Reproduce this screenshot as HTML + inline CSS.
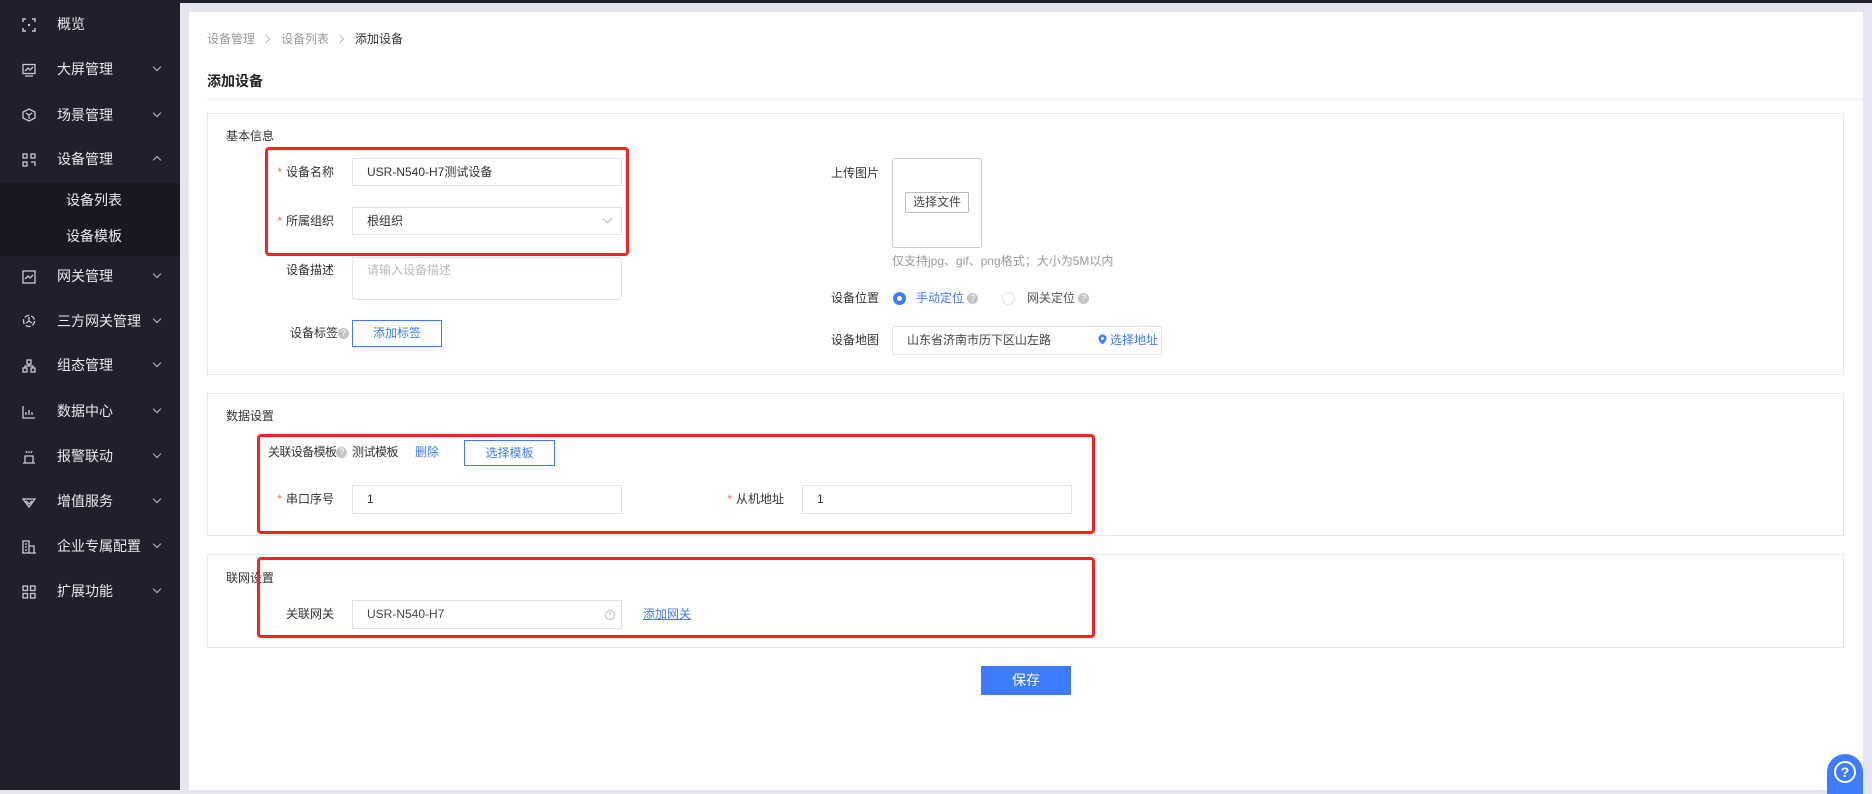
<!DOCTYPE html>
<html><head><meta charset="utf-8"><style>
*{margin:0;padding:0;box-sizing:border-box}
html{background:#e4e6ef}
body{width:1872px;height:790px;overflow:hidden;background:#e4e6ef;font-family:"Liberation Sans","Noto Sans CJK SC",sans-serif;font-size:12px;color:#333;position:relative}
.a{position:absolute;white-space:nowrap}
#side{position:absolute;left:0;top:0;width:180px;height:790px;background:#1e202b}
.mi{position:absolute;left:57px;color:#e8e9ee;font-size:14px;line-height:20px}
.ic{position:absolute;left:22px;width:14px;height:14px}
.ar{position:absolute;left:154px;width:6px;height:6px;border-right:1.2px solid #b9bcc7;border-bottom:1.2px solid #b9bcc7;transform:rotate(45deg)}
#main{position:absolute;left:189px;top:12px;width:1674px;height:778px;background:#fff}
.card{position:absolute;left:207px;width:1637px;border:1px solid #e6e6ea;background:#fff}
.lab{position:absolute;font-size:12px;color:#333;line-height:16px;text-align:right}
.inp{position:absolute;border:1px solid #dfe1e8;background:#fff;font-size:12px;color:#333;line-height:26px;padding-left:14px}
.star{color:#f56c6c;margin-right:4px}
.red{position:absolute;border:3px solid #ff2020;border-radius:4px}
.q{display:inline-block;width:11px;height:11px;border-radius:50%;background:#c4c4c4;color:#fff;font-size:9px;line-height:11px;text-align:center;vertical-align:1px}
.blue{color:#3d7bff}
.sep{display:inline-block;width:6px;height:6px;border-right:1px solid #bbb;border-top:1px solid #bbb;transform:rotate(45deg);margin:0 12px 1px 8px}
</style></head><body>
<div class="a" style="left:0;top:0;width:1872px;height:3px;background:#1e202b"></div>
<div id="side">
 <div style="position:absolute;left:0;top:183px;width:180px;height:73px;background:#171920"></div>
 <svg class="ic" style="top:18px" viewBox="0 0 14 14" fill="none" stroke="#c9cbd3" stroke-width="1.4"><path d="M1 4V1h3M10 1h3v3M13 10v3h-3M4 13H1v-3"/><rect x="6" y="6" width="2" height="2" fill="#c9cbd3" stroke="none"/></svg>
 <div class="mi" style="top:14px">概览</div>
 <svg class="ic" style="top:63px" viewBox="0 0 14 14" fill="none" stroke="#c9cbd3" stroke-width="1.3"><rect x="1" y="1.5" width="12" height="9"/><path d="M3 8l3-3 2 2 3-3M3 13h8"/></svg>
 <div class="mi" style="top:59px">大屏管理</div><div class="ar" style="top:64px"></div>
 <svg class="ic" style="top:108px" viewBox="0 0 14 14" fill="none" stroke="#c9cbd3" stroke-width="1.3"><path d="M7 1l6 3v6l-6 3-6-3V4zM4 5l3 2 3-2M7 7v4"/></svg>
 <div class="mi" style="top:105px">场景管理</div><div class="ar" style="top:110px"></div>
 <svg class="ic" style="top:153px" viewBox="0 0 14 14" fill="none" stroke="#c9cbd3" stroke-width="1.3"><rect x="1" y="1" width="4" height="4"/><rect x="9" y="1" width="4" height="4"/><rect x="1" y="9" width="4" height="4"/><path d="M9 9h4v4"/></svg>
 <div class="mi" style="top:149px">设备管理</div><div class="ar" style="top:157px;transform:rotate(225deg)"></div>
 <div class="mi" style="top:190px;left:66px">设备列表</div>
 <div class="mi" style="top:226px;left:66px">设备模板</div>
 <svg class="ic" style="top:270px" viewBox="0 0 14 14" fill="none" stroke="#c9cbd3" stroke-width="1.3"><rect x="1" y="1" width="12" height="12"/><path d="M3 9l3-3 2 2 3-3"/></svg>
 <div class="mi" style="top:266px">网关管理</div><div class="ar" style="top:271px"></div>
 <svg class="ic" style="top:314px" viewBox="0 0 14 14" fill="none" stroke="#c9cbd3" stroke-width="1.3"><circle cx="7" cy="7" r="5.5" stroke-dasharray="5 2"/><path d="M7 3v4l3 2M7 7l-3 2"/></svg>
 <div class="mi" style="top:311px">三方网关管理</div><div class="ar" style="top:316px"></div>
 <svg class="ic" style="top:359px" viewBox="0 0 14 14" fill="none" stroke="#c9cbd3" stroke-width="1.3"><rect x="5" y="1" width="4" height="4"/><rect x="1" y="9" width="4" height="4"/><rect x="9" y="9" width="4" height="4"/><path d="M7 5v2M3 9V7h8v2"/></svg>
 <div class="mi" style="top:355px">组态管理</div><div class="ar" style="top:360px"></div>
 <svg class="ic" style="top:405px" viewBox="0 0 14 14" fill="none" stroke="#c9cbd3" stroke-width="1.3"><path d="M1 1v12h12M4 10V7M7 10V5M10 10V7"/></svg>
 <div class="mi" style="top:401px">数据中心</div><div class="ar" style="top:406px"></div>
 <svg class="ic" style="top:450px" viewBox="0 0 14 14" fill="none" stroke="#c9cbd3" stroke-width="1.3"><path d="M3 13V6h8v7M1 13h12M4 1l1 2M10 1l-1 2M7 1v2"/></svg>
 <div class="mi" style="top:446px">报警联动</div><div class="ar" style="top:451px"></div>
 <svg class="ic" style="top:495px" viewBox="0 0 14 14" fill="none" stroke="#c9cbd3" stroke-width="1.3"><path d="M1 4h12l-6 8zM4 6l3 3 3-3"/></svg>
 <div class="mi" style="top:491px">增值服务</div><div class="ar" style="top:496px"></div>
 <svg class="ic" style="top:540px" viewBox="0 0 14 14" fill="none" stroke="#c9cbd3" stroke-width="1.3"><path d="M1 13V1h6v12M7 6h5v7M0 13h14M3 4h2M3 7h2M3 10h2"/></svg>
 <div class="mi" style="top:536px">企业专属配置</div><div class="ar" style="top:541px"></div>
 <svg class="ic" style="top:585px" viewBox="0 0 14 14" fill="none" stroke="#c9cbd3" stroke-width="1.3"><rect x="1" y="1" width="4.5" height="4.5"/><rect x="8.5" y="1" width="4.5" height="4.5"/><rect x="1" y="8.5" width="4.5" height="4.5"/><rect x="8.5" y="8.5" width="4.5" height="4.5"/></svg>
 <div class="mi" style="top:581px">扩展功能</div><div class="ar" style="top:586px"></div>
</div>
<div id="main"></div>
<div class="a" style="left:207px;top:31px;color:#999;line-height:16px">设备管理<span class="sep"></span>设备列表<span class="sep"></span><span style="color:#333">添加设备</span></div>
<div class="a" style="left:207px;top:72px;font-size:14px;font-weight:bold;color:#222;line-height:18px">添加设备</div>
<div class="a" style="left:207px;top:99px;width:1656px;height:1px;background:#e8e8ec"></div>

<div class="card" style="top:113px;height:262px"></div>
<div class="a" style="left:226px;top:128px;line-height:16px">基本信息</div>
<div class="lab" style="left:270px;top:164px;width:64px"><span class="star">*</span>设备名称</div>
<div class="inp" style="left:352px;top:158px;width:270px;height:28px">USR-N540-H7测试设备</div>
<div class="lab" style="left:270px;top:213px;width:64px"><span class="star">*</span>所属组织</div>
<div class="inp" style="left:352px;top:207px;width:270px;height:28px">根组织<div style="position:absolute;right:10px;top:7px;width:7px;height:7px;border-right:1px solid #bbb;border-bottom:1px solid #bbb;transform:rotate(45deg)"></div></div>
<div class="lab" style="left:270px;top:262px;width:64px">设备描述</div>
<div class="inp" style="left:352px;top:257px;width:270px;height:43px;color:#bbb;border-radius:3px;line-height:24px">请输入设备描述</div>
<div class="lab" style="left:270px;top:325px;width:80px;text-align:left;padding-left:20px">设备标签<span class="q">?</span></div>
<div class="a blue" style="left:352px;top:320px;width:90px;height:27px;border:1px solid #3d7bff;text-align:center;line-height:25px">添加标签</div>
<div class="red" style="left:265px;top:147px;width:364px;height:109px"></div>

<div class="lab" style="left:831px;top:165px">上传图片</div>
<div class="a" style="left:892px;top:158px;width:90px;height:90px;border:1px solid #ccc;border-radius:3px"></div>
<div class="a" style="left:905px;top:192px;width:64px;height:21px;border:1px solid #bbb;border-radius:2px;text-align:center;line-height:19px;color:#444">选择文件</div>
<div class="a" style="left:892px;top:253px;color:#999;line-height:16px">仅支持jpg、gif、png格式；大小为5M以内</div>
<div class="lab" style="left:831px;top:290px">设备位置</div>
<div class="a" style="left:893px;top:292px;width:13px;height:13px;border-radius:50%;background:#3d7bff"><div style="position:absolute;left:4px;top:4px;width:5px;height:5px;border-radius:50%;background:#fff"></div></div>
<div class="a blue" style="left:916px;top:290px;line-height:16px">手动定位 <span class="q">?</span></div>
<div class="a" style="left:1002px;top:292px;width:13px;height:13px;border-radius:50%;border:1px solid #ddd"></div>
<div class="a" style="left:1027px;top:290px;line-height:16px;color:#555">网关定位 <span class="q">?</span></div>
<div class="lab" style="left:831px;top:332px">设备地图</div>
<div class="inp" style="left:892px;top:326px;width:270px;height:29px;color:#444">山东省济南市历下区山左路<span class="blue" style="position:absolute;right:3px;top:0"><svg width="9" height="11" viewBox="0 0 9 11" style="vertical-align:-1px"><path d="M4.5 0.5a4 4 0 0 1 4 4c0 2.5-4 6-4 6s-4-3.5-4-6a4 4 0 0 1 4-4z" fill="#3d7bff"/><circle cx="4.5" cy="4.5" r="1.5" fill="#fff"/></svg> 选择地址</span></div>

<div class="card" style="top:393px;height:143px"></div>
<div class="a" style="left:226px;top:408px;line-height:16px">数据设置</div>
<div class="lab" style="left:268px;top:444px;text-align:left;letter-spacing:-0.6px">关联设备模板<span class="q" style="letter-spacing:0">?</span></div>
<div class="a" style="left:352px;top:444px;line-height:16px;letter-spacing:-0.5px">测试模板</div>
<div class="a blue" style="left:415px;top:444px;line-height:16px">删除</div>
<div class="a blue" style="left:464px;top:440px;width:91px;height:26px;border:1px solid #3d7bff;text-align:center;line-height:24px">选择模板</div>
<div class="lab" style="left:270px;top:491px;width:64px"><span class="star">*</span>串口序号</div>
<div class="inp" style="left:352px;top:485px;width:270px;height:29px">1</div>
<div class="lab" style="left:720px;top:491px;width:64px"><span class="star">*</span>从机地址</div>
<div class="inp" style="left:802px;top:485px;width:270px;height:29px">1</div>
<div class="red" style="left:257px;top:434px;width:838px;height:100px"></div>

<div class="card" style="top:554px;height:94px"></div>
<div class="a" style="left:226px;top:570px;line-height:16px">联网设置</div>
<div class="lab" style="left:270px;top:606px;width:64px">关联网关</div>
<div class="inp" style="left:352px;top:600px;width:270px;height:29px;color:#444">USR-N540-H7<span style="position:absolute;right:6px;top:9px;width:10px;height:10px;border:1px solid #bbb;border-radius:50%;font-size:7px;line-height:8px;text-align:center;color:#bbb">×</span></div>
<div class="a blue" style="left:643px;top:606px;line-height:16px;text-decoration:underline">添加网关</div>
<div class="red" style="left:257px;top:557px;width:838px;height:81px"></div>

<div class="a" style="left:981px;top:666px;width:90px;height:29px;background:#3d7bff;color:#fff;font-size:14px;text-align:center;line-height:29px">保存</div>
<div class="a" style="left:1827px;top:754px;width:36px;height:40px;border-radius:18px 18px 0 0;background:#3d7bff"><div style="position:absolute;left:7px;top:7px;width:22px;height:22px;border:2px solid #fff;border-radius:50%;color:#fff;font-size:14px;font-weight:bold;text-align:center;line-height:18px">?</div></div>
</body></html>
